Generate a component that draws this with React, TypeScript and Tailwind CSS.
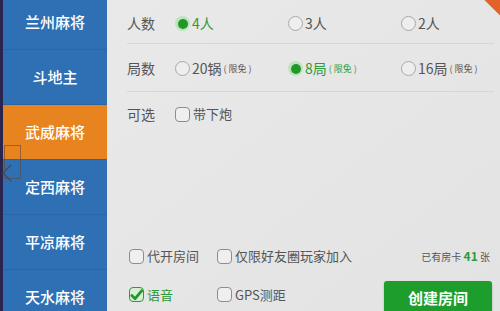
import { useState } from "react";

const games = ["兰州麻将", "斗地主", "武威麻将", "定西麻将", "平凉麻将", "天水麻将"];

const FONT = { fontFamily: '"Noto Sans CJK SC", "Noto Sans", sans-serif' };

function Radio({ checked, label, note, onClick }: { checked: boolean; label: string; note?: string; onClick: () => void }) {
  return (
    <button onClick={onClick} className="flex items-center gap-[2px] w-[113px] last:w-auto">
      {checked ? (
        <span className="w-[15px] h-[15px] rounded-full bg-[#bfe3bd] flex items-center justify-center">
          <span className="w-[10px] h-[10px] rounded-full bg-[#1f9a2a]" />
        </span>
      ) : (
        <span className="w-[15px] h-[15px] rounded-full border border-[#a9a9a9] bg-[#eeeeee]" />
      )}
      <span className={`text-[14px] ${checked ? "text-[#2f9a38]" : "text-[#555]"}`}>{label}</span>
      {note && <span className={`text-[9px] ${checked ? "text-[#2f9a38]" : "text-[#555]"}`}>( 限免 )</span>}
    </button>
  );
}

function Check({ checked, label, onClick }: { checked: boolean; label: string; onClick: () => void }) {
  return (
    <button onClick={onClick} className="flex items-center gap-[3px]">
      <span
        className={`w-[15px] h-[15px] rounded-[4px] border flex items-center justify-center ${
          checked ? "border-[#2d9a36] bg-[#d8eed6]" : "border-[#8d8d8d] bg-[#efefef]"
        }`}
      >
        {checked && (
          <svg width="14" height="12" viewBox="0 0 14 12">
            <path d="M2 6.5 L5.5 10 L12.5 1.5" fill="none" stroke="#1f9a2a" strokeWidth="3" strokeLinecap="round" strokeLinejoin="round" />
          </svg>
        )}
      </span>
      <span className={`text-[13px] ${checked ? "text-[#2f9a38]" : "text-[#555]"}`}>{label}</span>
    </button>
  );
}

export default function App() {
  const [active, setActive] = useState(2);
  const [players, setPlayers] = useState(0);
  const [rounds, setRounds] = useState(1);
  const [opts, setOpts] = useState({ pao: false, proxy: false, friends: false, voice: true, gps: false });

  const toggle = (k: keyof typeof opts) => setOpts(prev => ({ ...prev, [k]: !prev[k] }));

  return (
    <div className="relative w-[500px] h-[311px] overflow-hidden flex bg-[#e7e7e7]" style={FONT}>
      {/* sidebar */}
      <div className="w-[107px] shrink-0 flex bg-[#2f6fb4]">
        <div className="w-[3px] bg-[#2a2550]" />
        <div className="flex-1 flex flex-col mt-[-5px]">
          {games.map((g, i) => (
            <button
              key={g}
              onClick={() => setActive(i)}
              className={`h-[55px] shrink-0 flex items-center justify-center text-[15px] font-medium text-white border-b border-[#2a65a6] ${
                active === i ? "bg-[#e8841f]" : "bg-[#2f6fb4]"
              }`}
            >
              {g}
            </button>
          ))}
        </div>
      </div>

      {/* collapse handle */}
      <div className="absolute left-[4px] top-[145px] w-[17px] h-[34px] border border-[#5a4a40]/60 flex items-end">
        <svg width="12" height="18" viewBox="0 0 12 18" className="ml-[-4px] mb-[-4px]">
          <path d="M10 1 L2 9 L10 17" fill="none" stroke="#4a4a58" strokeWidth="1.5" />
        </svg>
      </div>

      {/* corner ornament */}
      <div className="absolute right-[-14px] top-[-14px] w-[34px] h-[22px] rotate-45 bg-[#e2622a]" />

      {/* content */}
      <div className="flex-1 min-w-0 flex flex-col bg-gradient-to-br from-[#e9e9e9] to-[#e3e3e3]">
        <div className="ml-[20px] mr-[6px]">
          <div className="h-[44px] pt-[4px] flex items-center border-b border-[#d6d6d6]">
            <span className="w-[48px] text-[14px] text-[#555]">人数</span>
            {["4人", "3人", "2人"].map((p, i) => (
              <Radio key={p} checked={players === i} label={p} onClick={() => setPlayers(i)} />
            ))}
          </div>
          <div className="h-[48px] pt-[2px] flex items-center border-b border-[#d6d6d6]">
            <span className="w-[48px] text-[14px] text-[#555]">局数</span>
            {["20锅", "8局", "16局"].map((r, i) => (
              <Radio key={r} checked={rounds === i} label={r} note="限免" onClick={() => setRounds(i)} />
            ))}
          </div>
          <div className="h-[44px] flex items-center">
            <span className="w-[48px] text-[14px] text-[#555]">可选</span>
            <Check checked={opts.pao} label="带下炮" onClick={() => toggle("pao")} />
          </div>
        </div>

        <div className="mt-auto ml-[22px] mr-[8px] flex flex-col">
          <div className="h-[38px] pb-[8px] flex items-center">
            <div className="w-[88px]">
              <Check checked={opts.proxy} label="代开房间" onClick={() => toggle("proxy")} />
            </div>
            <Check checked={opts.friends} label="仅限好友圈玩家加入" onClick={() => toggle("friends")} />
            <span className="ml-auto mr-[2px] text-[10px] text-[#555]">
              已有房卡 <span className="text-[12px] font-bold text-[#2f9a38]">41</span> 张
            </span>
          </div>
          <div className="h-[32px] flex items-start">
            <div className="w-[88px] pt-[6px]">
              <Check checked={opts.voice} label="语音" onClick={() => toggle("voice")} />
            </div>
            <div className="pt-[6px]">
              <Check checked={opts.gps} label="GPS测距" onClick={() => toggle("gps")} />
            </div>
            <button className="ml-auto mt-[2px] w-[108px] h-[34px] rounded-[3px] bg-[#1d9e2c] text-white text-[15px] font-bold shadow-[0_1px_2px_rgba(0,0,0,0.25)]">
              创建房间
            </button>
          </div>
        </div>
      </div>
    </div>
  );
}
